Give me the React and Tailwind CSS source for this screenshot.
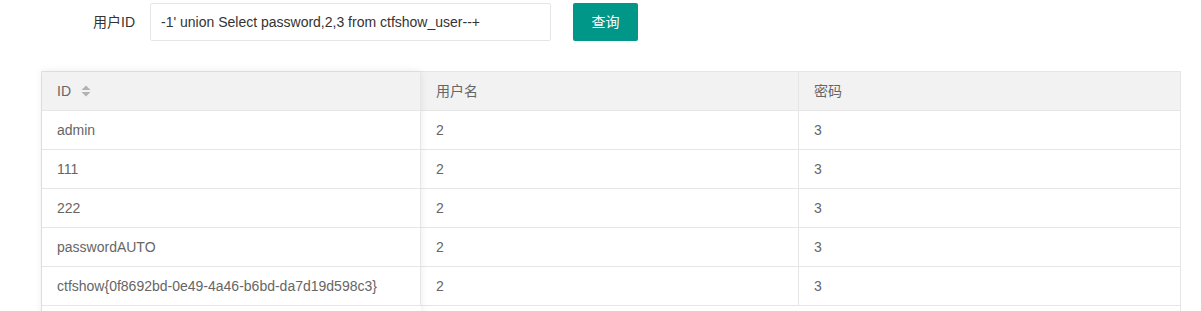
import React from 'react';

const rows = [
  { id: 'admin', name: '2', pass: '3' },
  { id: '111', name: '2', pass: '3' },
  { id: '222', name: '2', pass: '3' },
  { id: 'passwordAUTO', name: '2', pass: '3' },
  { id: 'ctfshow{0f8692bd-0e49-4a46-b6bd-da7d19d598c3}', name: '2', pass: '3' },
];

function SortIcon() {
  return (
    <svg width="10" height="14" viewBox="0 0 10 14" className="ml-[10px]">
      <path d="M0.5 6 L5 1.5 L9.5 6 Z" fill="#b2b2b2" />
      <path d="M0.5 8 L5 12.5 L9.5 8 Z" fill="#b2b2b2" />
    </svg>
  );
}

export default function App() {
  return (
    <div
      className="w-[1201px] h-[311px] overflow-hidden bg-white text-[14px] text-[#666]"
      style={{ fontFamily: '"Liberation Sans", "Noto Sans CJK SC", sans-serif' }}
    >
      <div className="flex items-center h-[38px] mt-[3px]">
        <label className="w-[150px] pr-[15px] text-right text-[#333]">用户ID</label>
        <input
          readOnly
          value="-1' union Select password,2,3 from ctfshow_user--+"
          className="w-[401px] h-[38px] border border-[#e6e6e6] rounded-[2px] pl-[10px] text-[#333] outline-none"
          style={{ fontFamily: '"Liberation Sans", "Noto Sans CJK SC", sans-serif' }}
        />
        <button className="ml-[22px] h-[38px] w-[65px] bg-[#009688] text-white rounded-[2px]">查询</button>
      </div>

      <div className="ml-[41px] mt-[30px] w-[1140px] border-l border-r border-t border-[#e6e6e6] flex">
        <div className="relative z-10 w-[379px] bg-white shadow-[0_-1px_8px_rgba(0,0,0,0.08)]">
          <div className="h-[39px] bg-[#f2f2f2] border-b border-r border-[#e6e6e6] flex items-center px-[15px]">
            ID
            <SortIcon />
          </div>
          {rows.map((r, i) => (
            <div key={i} className="h-[39px] border-b border-r border-[#e6e6e6] flex items-center px-[15px] whitespace-nowrap">
              {r.id}
            </div>
          ))}
        </div>
        <div className="flex-1">
          <div className="grid grid-cols-[378px_1fr]">
            <div className="h-[39px] bg-[#f2f2f2] border-b border-r border-[#e6e6e6] flex items-center px-[15px]">用户名</div>
            <div className="h-[39px] bg-[#f2f2f2] border-b border-[#e6e6e6] flex items-center px-[15px]">密码</div>
            {rows.map((r, i) => (
              <React.Fragment key={i}>
                <div className="h-[39px] border-b border-r border-[#e6e6e6] flex items-center px-[15px]">{r.name}</div>
                <div className="h-[39px] border-b border-[#e6e6e6] flex items-center px-[15px]">{r.pass}</div>
              </React.Fragment>
            ))}
          </div>
          <div className="h-[20px]" />
        </div>
      </div>
    </div>
  );
}
